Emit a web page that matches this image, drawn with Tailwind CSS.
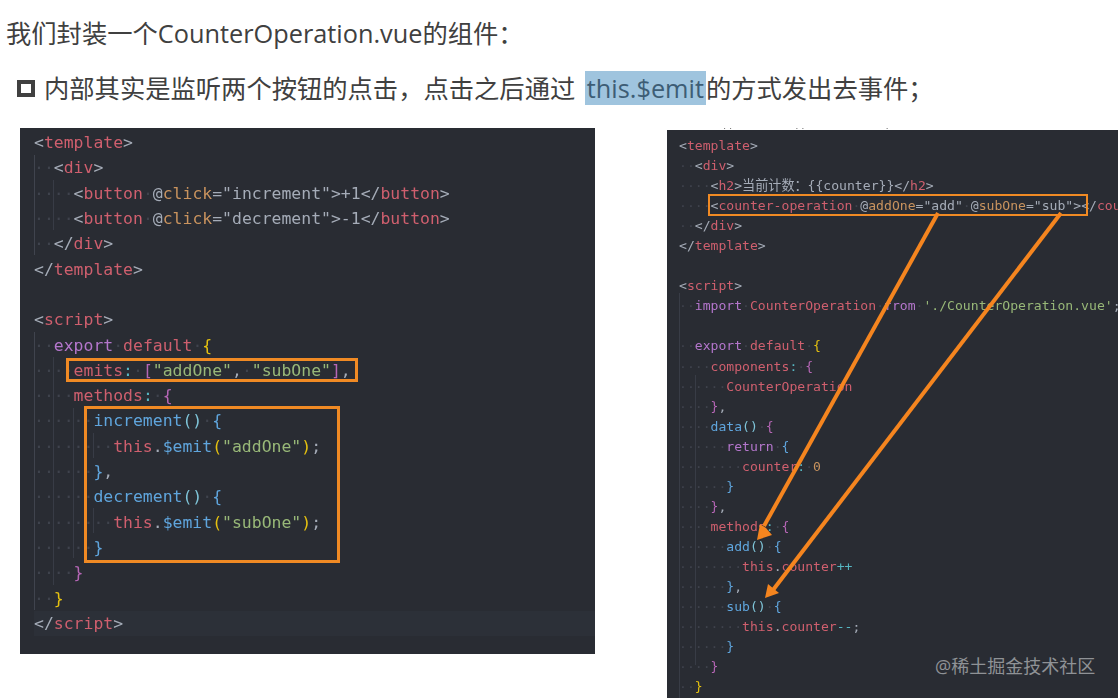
<!DOCTYPE html>
<html lang="zh">
<head>
<meta charset="utf-8">
<script src="https://cdn.jsdelivr.net/npm/@tailwindcss/browser@4"></script>
</head>
<body class="bg-white">
<main class="relative w-[1118px] h-[698px] overflow-hidden bg-white font-['Open_Sans','Noto_Sans_CJK_SC',sans-serif] text-[#404040]">
  <h1 class="pl-[6px] pt-[14px] h-[66px] text-[25.3px] leading-[38px] font-normal">我们封装一个CounterOperation.vue的组件：</h1>
  <div class="flex items-center h-[44px] pl-[17px] text-[25.3px] leading-[38px]">
    <span class="w-[18px] h-[17px] border-[4px] border-[#404040] mr-[9px]"></span>
    <span class="whitespace-pre">内部其实是监听两个按钮的点击，点击之后通过 <span class="bg-[#9fc4de] text-[#3d5d75] px-[2px] ml-[3px]">this.$emit</span>的方式发出去事件；</span>
  </div>
  <div class="flex items-start mt-[18px] font-['DejaVu_Sans_Mono','Noto_Sans_CJK_SC',monospace]">

    <section class="relative ml-[20px] w-[575px] h-[526px] bg-[#292c33] pl-[14px] pt-[2.2px] text-[16.45px] leading-[25.3px] text-[#a5acb8] blur-[0.3px]">
      <div class="absolute left-[14px] top-[483px] right-0 h-[25px] bg-[#2c3038]"></div>
      <div class="absolute left-[14px] top-[27px] w-px h-[100px] bg-[#40444e]"></div>
      <div class="absolute left-[14px] top-[204px] w-px h-[278px] bg-[#40444e]"></div>
      <div class="absolute left-[33px] top-[52px] w-px h-[50px] bg-[#383c46]"></div>
      <div class="absolute left-[33px] top-[229px] w-px h-[228px] bg-[#383c46]"></div>
      <div class="absolute left-[53px] top-[280px] w-px h-[150px] bg-[#383c46]"></div>
      <div class="absolute left-[73px] top-[305px] w-px h-[25px] bg-[#383c46]"></div>
      <div class="absolute left-[73px] top-[380px] w-px h-[25px] bg-[#383c46]"></div>
      <div class="relative flex flex-col whitespace-pre">
<div>&lt;<span class="text-[#cf5f6e]">template</span>&gt;</div>
<div><span class="text-[#3f434d]">··</span>&lt;<span class="text-[#cf5f6e]">div</span>&gt;</div>
<div><span class="text-[#3f434d]">····</span>&lt;<span class="text-[#cf5f6e]">button</span><span class="text-[#3f434d]">·</span>@<span class="text-[#c9935e]">click</span>="increment"&gt;+1&lt;/<span class="text-[#cf5f6e]">button</span>&gt;</div>
<div><span class="text-[#3f434d]">····</span>&lt;<span class="text-[#cf5f6e]">button</span><span class="text-[#3f434d]">·</span>@<span class="text-[#c9935e]">click</span>="decrement"&gt;-1&lt;/<span class="text-[#cf5f6e]">button</span>&gt;</div>
<div><span class="text-[#3f434d]">··</span>&lt;/<span class="text-[#cf5f6e]">div</span>&gt;</div>
<div>&lt;/<span class="text-[#cf5f6e]">template</span>&gt;</div>
<div class="h-[25.3px]"></div>
<div>&lt;<span class="text-[#cf5f6e]">script</span>&gt;</div>
<div><span class="text-[#3f434d]">··</span><span class="text-[#b476cc]">export</span><span class="text-[#3f434d]">·</span><span class="text-[#cf5f6e]">default</span><span class="text-[#3f434d]">·</span><span class="text-[#e5c110]">{</span></div>
<div><span class="text-[#3f434d]">····</span><span class="text-[#cf5f6e]">emits</span><span class="text-[#56b6c2]">:</span><span class="text-[#3f434d]">·</span><span class="text-[#b566b5]">[</span><span class="text-[#98b878]">"addOne"</span>,<span class="text-[#3f434d]">·</span><span class="text-[#98b878]">"subOne"</span><span class="text-[#b566b5]">]</span>,</div>
<div><span class="text-[#3f434d]">····</span><span class="text-[#cf5f6e]">methods</span><span class="text-[#56b6c2]">:</span><span class="text-[#3f434d]">·</span><span class="text-[#b566b5]">{</span></div>
<div><span class="text-[#3f434d]">······</span><span class="text-[#5fa5dd]">increment</span><span class="text-[#7fc4d8]">()</span><span class="text-[#3f434d]">·</span><span class="text-[#5fa5dd]">{</span></div>
<div><span class="text-[#3f434d]">········</span><span class="text-[#cf5f6e]">this</span>.<span class="text-[#5fa5dd]">$emit</span><span class="text-[#e5c110]">(</span><span class="text-[#98b878]">"addOne"</span><span class="text-[#e5c110]">)</span>;</div>
<div><span class="text-[#3f434d]">······</span><span class="text-[#5fa5dd]">}</span>,</div>
<div><span class="text-[#3f434d]">······</span><span class="text-[#5fa5dd]">decrement</span><span class="text-[#7fc4d8]">()</span><span class="text-[#3f434d]">·</span><span class="text-[#5fa5dd]">{</span></div>
<div><span class="text-[#3f434d]">········</span><span class="text-[#cf5f6e]">this</span>.<span class="text-[#5fa5dd]">$emit</span><span class="text-[#e5c110]">(</span><span class="text-[#98b878]">"subOne"</span><span class="text-[#e5c110]">)</span>;</div>
<div><span class="text-[#3f434d]">······</span><span class="text-[#5fa5dd]">}</span></div>
<div><span class="text-[#3f434d]">····</span><span class="text-[#b566b5]">}</span></div>
<div><span class="text-[#3f434d]">··</span><span class="text-[#e5c110]">}</span></div>
<div>&lt;/<span class="text-[#cf5f6e]">script</span>&gt;</div>
      </div>
      <div class="absolute left-[46px] top-[230px] w-[292px] h-[24px] border-[3px] border-[#f08a24]"></div>
      <div class="absolute left-[64px] top-[278px] w-[256px] h-[157px] border-[3px] border-[#f08a24]"></div>
    </section>

    <section class="relative ml-[72px] w-[451px] h-[570px] overflow-hidden bg-[#292c33] pl-[12px] pt-[8px] text-[13.1px] leading-[20.05px] text-[#a5acb8] blur-[0.3px]">
      <div class="absolute left-0 top-0 right-0 h-[2px] overflow-hidden bg-white text-[10px] leading-[12px] text-[#666]"><div class="-mt-[10px] pl-[2px] whitespace-pre">src  &gt;  App.vue  &gt;  App.vue  &gt;  script</div></div>
      <div class="absolute left-[12px] top-[165px] w-px h-[405px] bg-[#383c46]"></div>
      <div class="absolute left-[28px] top-[247px] w-px h-[290px] bg-[#383c46]"></div>
      <div class="relative flex flex-col whitespace-pre">
<div>&lt;<span class="text-[#cf5f6e]">template</span>&gt;</div>
<div><span class="text-[#3f434d]">··</span>&lt;<span class="text-[#cf5f6e]">div</span>&gt;</div>
<div><span class="text-[#3f434d]">····</span>&lt;<span class="text-[#cf5f6e]">h2</span>&gt;当前计数：{{counter}}&lt;/<span class="text-[#cf5f6e]">h2</span>&gt;</div>
<div><span class="text-[#3f434d]">····</span>&lt;<span class="text-[#cf5f6e]">counter-operation</span><span class="text-[#3f434d]">·</span>@<span class="text-[#c9935e]">addOne</span>="add"<span class="text-[#3f434d]">·</span>@<span class="text-[#c9935e]">subOne</span>="sub"&gt;&lt;/<span class="text-[#cf5f6e]">counter-operation</span>&gt;</div>
<div><span class="text-[#3f434d]">··</span>&lt;/<span class="text-[#cf5f6e]">div</span>&gt;</div>
<div>&lt;/<span class="text-[#cf5f6e]">template</span>&gt;</div>
<div class="h-[20.05px]"></div>
<div>&lt;<span class="text-[#cf5f6e]">script</span>&gt;</div>
<div><span class="text-[#3f434d]">··</span><span class="text-[#b476cc]">import</span><span class="text-[#3f434d]">·</span><span class="text-[#cf5f6e]">CounterOperation</span><span class="text-[#3f434d]">·</span><span class="text-[#b476cc]">from</span><span class="text-[#3f434d]">·</span><span class="text-[#98b878]">'./CounterOperation.vue'</span>;</div>
<div class="h-[20.05px]"></div>
<div><span class="text-[#3f434d]">··</span><span class="text-[#b476cc]">export</span><span class="text-[#3f434d]">·</span><span class="text-[#cf5f6e]">default</span><span class="text-[#3f434d]">·</span><span class="text-[#e5c110]">{</span></div>
<div><span class="text-[#3f434d]">····</span><span class="text-[#cf5f6e]">components</span><span class="text-[#56b6c2]">:</span><span class="text-[#3f434d]">·</span><span class="text-[#b566b5]">{</span></div>
<div><span class="text-[#3f434d]">······</span><span class="text-[#cf5f6e]">CounterOperation</span></div>
<div><span class="text-[#3f434d]">····</span><span class="text-[#b566b5]">}</span>,</div>
<div><span class="text-[#3f434d]">····</span><span class="text-[#5fa5dd]">data</span><span class="text-[#7fc4d8]">()</span><span class="text-[#3f434d]">·</span><span class="text-[#b566b5]">{</span></div>
<div><span class="text-[#3f434d]">······</span><span class="text-[#b476cc]">return</span><span class="text-[#3f434d]">·</span><span class="text-[#5fa5dd]">{</span></div>
<div><span class="text-[#3f434d]">········</span><span class="text-[#cf5f6e]">counter</span><span class="text-[#56b6c2]">:</span><span class="text-[#3f434d]">·</span><span class="text-[#c9935e]">0</span></div>
<div><span class="text-[#3f434d]">······</span><span class="text-[#5fa5dd]">}</span></div>
<div><span class="text-[#3f434d]">····</span><span class="text-[#b566b5]">}</span>,</div>
<div><span class="text-[#3f434d]">····</span><span class="text-[#cf5f6e]">methods</span><span class="text-[#56b6c2]">:</span><span class="text-[#3f434d]">·</span><span class="text-[#b566b5]">{</span></div>
<div><span class="text-[#3f434d]">······</span><span class="text-[#5fa5dd]">add</span><span class="text-[#7fc4d8]">()</span><span class="text-[#3f434d]">·</span><span class="text-[#5fa5dd]">{</span></div>
<div><span class="text-[#3f434d]">········</span><span class="text-[#cf5f6e]">this</span>.<span class="text-[#cf5f6e]">counter</span><span class="text-[#56b6c2]">++</span></div>
<div><span class="text-[#3f434d]">······</span><span class="text-[#5fa5dd]">}</span>,</div>
<div><span class="text-[#3f434d]">······</span><span class="text-[#5fa5dd]">sub</span><span class="text-[#7fc4d8]">()</span><span class="text-[#3f434d]">·</span><span class="text-[#5fa5dd]">{</span></div>
<div><span class="text-[#3f434d]">········</span><span class="text-[#cf5f6e]">this</span>.<span class="text-[#cf5f6e]">counter</span><span class="text-[#56b6c2]">--</span>;</div>
<div><span class="text-[#3f434d]">······</span><span class="text-[#5fa5dd]">}</span></div>
<div><span class="text-[#3f434d]">····</span><span class="text-[#b566b5]">}</span></div>
<div><span class="text-[#3f434d]">··</span><span class="text-[#e5c110]">}</span></div>
      </div>
      <div class="absolute left-[41px] top-[66px] w-[380px] h-[22px] border-2 border-[#f08a24]"></div>
    </section>
  </div>

  <svg class="absolute left-0 top-0 pointer-events-none" width="1118" height="698" viewBox="0 0 1118 698" fill="none">
    <path d="M938 213 L764 526" stroke="#f5851f" stroke-width="4"/>
    <path d="M757 540 L760 524 L766 528 L772 535 Z" fill="#f5851f"/>
    <path d="M1061 213 L773 590" stroke="#f5851f" stroke-width="4"/>
    <path d="M765 598 L768 584 L774 589 L779 593 Z" fill="#f5851f"/>
  </svg>
  <div class="absolute left-[935px] top-[653px] text-[18px] leading-[26px] text-[#8f9296] font-['Open_Sans','Noto_Sans_CJK_SC',sans-serif]">@稀土掘金技术社区</div>
</main>
</body>
</html>
